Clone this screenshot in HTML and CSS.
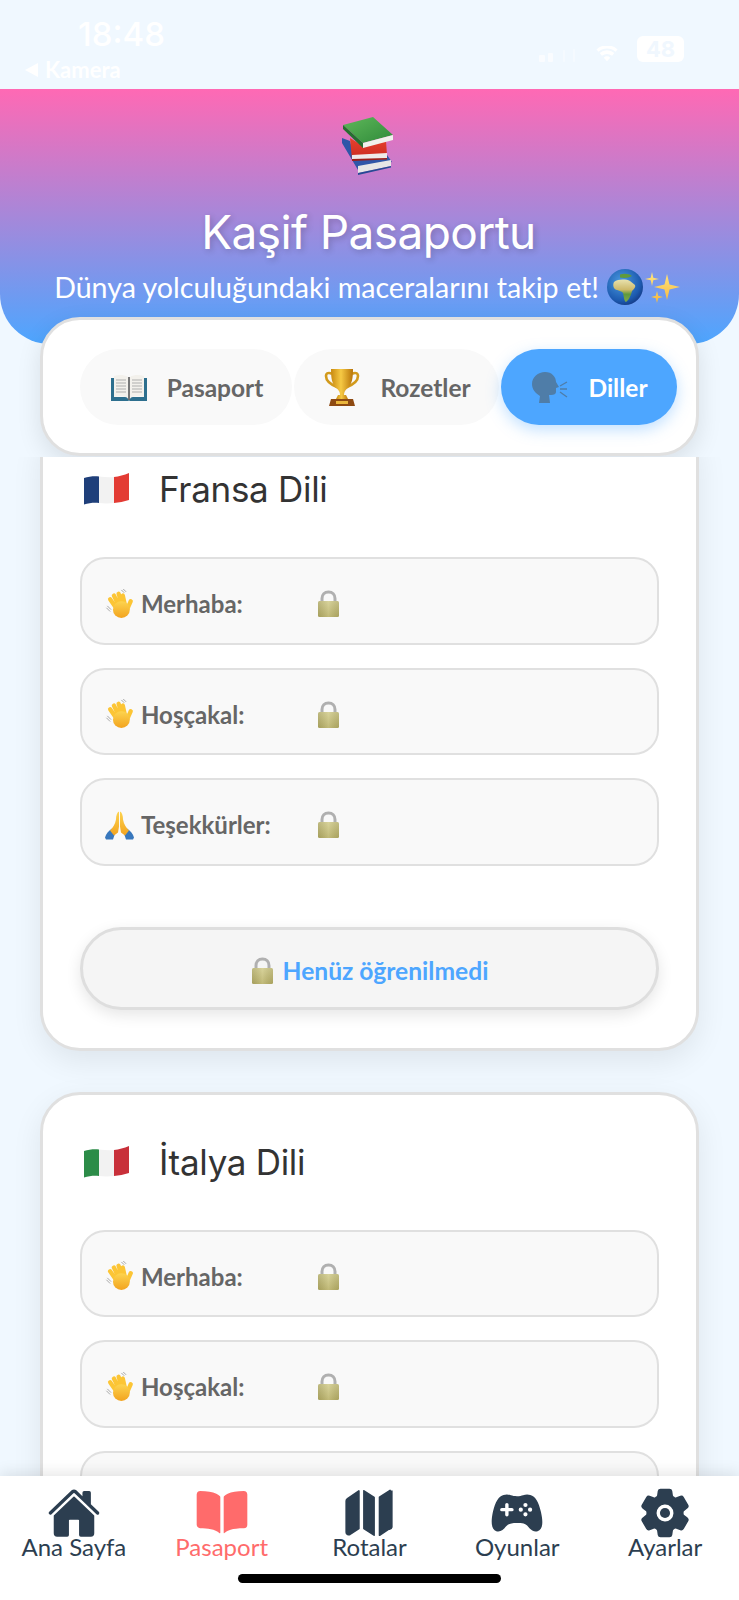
FILE: index.html
```html
<!DOCTYPE html>
<html lang="tr">
<head>
<meta charset="utf-8">
<title>Kaşif Pasaportu</title>
<link rel="stylesheet" href="styles.css">
</head>
<body>
<svg class="defs" aria-hidden="true">
  <defs>
    <linearGradient id="gGreen" x1="0" y1="0" x2="1" y2="1"><stop offset="0" stop-color="#5fb85a"/><stop offset="1" stop-color="#2f8a3a"/></linearGradient>
    <linearGradient id="gRed" x1="0" y1="0" x2="0" y2="1"><stop offset="0" stop-color="#e8412e"/><stop offset="1" stop-color="#c82a20"/></linearGradient>
    <radialGradient id="gSea" cx=".4" cy=".35" r=".75"><stop offset="0" stop-color="#4a9ae0"/><stop offset=".7" stop-color="#1d5bb0"/><stop offset="1" stop-color="#12307a"/></radialGradient>
    <linearGradient id="gLand" x1="0" y1="0" x2="0" y2="1"><stop offset="0" stop-color="#e8e2ae"/><stop offset=".45" stop-color="#cdb96a"/><stop offset=".65" stop-color="#5f9a3c"/><stop offset="1" stop-color="#7fa84a"/></linearGradient>
    <linearGradient id="gGold" x1="0" y1="0" x2="1" y2="0"><stop offset="0" stop-color="#c98a10"/><stop offset=".45" stop-color="#f6c944"/><stop offset="1" stop-color="#b87408"/></linearGradient>
    <linearGradient id="gHand" x1="0" y1="0" x2="0" y2="1"><stop offset="0" stop-color="#fdd44f"/><stop offset="1" stop-color="#f2a31f"/></linearGradient>
    <linearGradient id="gLock" x1="0" y1="0" x2="0" y2="1"><stop offset="0" stop-color="#d3cd8e"/><stop offset="1" stop-color="#b8b066"/></linearGradient>
    <linearGradient id="gStar" x1="0" y1="0" x2="0" y2="1"><stop offset="0" stop-color="#ffe680"/><stop offset="1" stop-color="#f6b73c"/></linearGradient>
    <linearGradient id="gFade" x1="0" y1="0" x2="1" y2="0"><stop offset="0" stop-color="#000" stop-opacity=".1"/><stop offset=".5" stop-color="#fff" stop-opacity=".12"/><stop offset="1" stop-color="#000" stop-opacity=".08"/></linearGradient>
  </defs>
  <symbol id="e-wave" viewBox="10 8 30 32">
    <g fill="none" stroke="#fcc535" stroke-width="4.600" stroke-linecap="round">
      <path d="M22 29l-7-10M25 27l-6-12M28 26l-4-13M31 26l-2.500-11M33 30l4-9"/>
    </g>
    <ellipse cx="27" cy="30" rx="9" ry="9" fill="url(#gHand)"/>
    <path fill="none" stroke="#8c8c8c" stroke-width=".8" d="M27 9l3 3M29 8l3 3M11 28l4 4M12 26l4 4"/>
  </symbol>
  <symbol id="e-pray" viewBox="9 10 29 29">
    <path fill="#3978bd" d="M9 37c1-4 4-7 7-9l3 5-2 6h-7zM38 37c-1-4-4-7-7-9l-3 5 2 6h7z"/>
    <path fill="url(#gHand)" d="M23 11c-2 1-3 4-3 8-1 5-3 8-6 11l4 5 4-3 1-6zM24 11c2 1 3 4 3 8 1 5 3 8 6 11l-4 5-4-3-1-6z"/>
  </symbol>
  <symbol id="e-lock" viewBox="0 0 23 27">
    <path fill="none" stroke="#b0b0b0" stroke-width="3" d="M5 14V8.500C5 4.500 7.500 2 11.500 2S18 4.500 18 8.500V14"/>
    <rect x="1" y="11" width="21" height="16" rx="1.500" fill="url(#gLock)"/>
    <rect x="1" y="11" width="21" height="16" rx="1.500" fill="url(#gFade)"/>
  </symbol>
  <symbol id="e-fr" viewBox="0 0 45 32">
    <path fill="#1f3f7a" d="M0 5c5-1.500 10-2 15-1.500V30c-5-.5-10 0-15 1.500z"/>
    <path fill="#f2f2f2" d="M15 3.500c5 .5 10 1 15 .5v26c-5 .5-10 .5-15 0z"/>
    <path fill="#e33b34" d="M30 4c5-.5 10-2 15-4v27c-5 1.500-10 2.500-15 3z"/>
  </symbol>
  <symbol id="e-it" viewBox="0 0 45 32">
    <path fill="#2c8c48" d="M0 5c5-1.500 10-2 15-1.500V30c-5-.5-10 0-15 1.500z"/>
    <path fill="#f2f2f2" d="M15 3.500c5 .5 10 1 15 .5v26c-5 .5-10 .5-15 0z"/>
    <path fill="#c8303a" d="M30 4c5-.5 10-2 15-4v27c-5 1.500-10 2.500-15 3z"/>
  </symbol>
</svg>

<div class="app">
  <div class="statusbar">
    <div class="status-left">
      <div class="time">18:48</div>
      <div class="back"><span class="back-arrow"></span>Kamera</div>
    </div>
    <div class="status-right">
      <svg class="signal" viewBox="0 0 38 13"><rect x="0" y="6" width="6" height="7" rx="1"/><rect x="9" y="4" width="5" height="9" rx="1"/><rect x="24" y="1" width="2" height="12" rx="1" opacity=".5"/><rect x="34" y="0" width="2" height="13" rx="1" opacity=".5"/></svg>
      <svg class="wifi" viewBox="0 0 24 16"><path d="M12 16l-3.500-4a5 5 0 017 0zM6.500 10L4 7a12 12 0 0116 0l-2.500 3a9 9 0 00-11 0zM2.800 5.500L.5 3a17 17 0 0123 0l-2.300 2.500a14 14 0 00-18.400 0z"/></svg>
      <div class="battery">48</div>
    </div>
  </div>

  <header class="hero">
    <svg class="hero-books" viewBox="0 0 80 75">
      <path fill="#2f56a8" d="M12 33l8 3 5 19 32-5 5 7-34 8-16-27z"/>
      <path fill="#e6e6e6" d="M28 61l33-6v6l-33 7z"/>
      <path fill="#264a94" d="M28 68l33-7v1.500L28 70z"/>
      <path fill="url(#gRed)" d="M20 33l13 8 23-5 1 14-35 5z"/>
      <path fill="#efeaea" d="M22 50l35-2v6l-35 1z"/>
      <path fill="#9c1d18" d="M22 54l35-1v1.500l-35 1.500z"/>
      <path fill="url(#gGreen)" d="M13 20l30-8 20 18-30 8z"/>
      <path fill="#256f30" d="M13 20v4l20 19v-5z"/>
      <path fill="#f1f1ec" d="M33 38l30-8v5l-30 8z"/>
    </svg>
    <h1 class="hero-title">Kaşif Pasaportu</h1>
    <div class="hero-sub">
      <span>Dünya yolculuğundaki maceralarını takip et!</span>
      <svg class="hero-sub-icons" viewBox="6 0 80 50">
        <circle cx="26" cy="25" r="18" fill="url(#gSea)"/>
        <path fill="#5f9a3c" d="M21 12.500c4-1.500 9-1 12 1.500-3 2-8 2.500-12 1.500z"/>
        <path fill="url(#gLand)" d="M15 20c4-3 12-3 16-1l5 4c1 2-1 4-3 6-1 4-3 9-6 11-2-1-2-5-3-9-2-3-7-2-9-5-1-2-1-4 0-6z"/>
        <path fill="url(#gStar)" d="M53 10l1.300 5.700L60 17l-5.700 1.300L53 24l-1.300-5.700L46 17l5.700-1.300zM68 12l2.500 10.500L81 25l-10.500 2.500L68 38l-2.500-10.500L55 25l10.500-2.500zM58 29l1.200 4.800L64 35l-4.800 1.200L58 41l-1.200-4.800L52 35l4.800-1.200z"/>
      </svg>
    </div>
  </header>

  <nav class="tabs">
    <div class="tab">
      <svg class="tab-icon tab-book" viewBox="12 13 36 27">
        <path fill="#2d6f8e" d="M12 17h3v19h13l2 4 2-4h13V17h3v23H12z"/>
        <path fill="#f3f1ec" d="M15 15c5-1.500 10-1.500 14 1v21c-4-2-9-2.500-14-1zM45 15c-5-1.500-10-1.500-14 1v21c4-2 9-2.500 14-1z"/>
        <path fill="none" stroke="#a8a8a8" stroke-width=".9" d="M17 19h10M17 22h10M17 25h10M17 28h10M17 31h10M33 19h10M33 22h10M33 25h10M33 28h10M33 31h10"/>
        <path stroke="#4b4b4b" stroke-width="1.500" d="M30 16v23"/>
      </svg>
      <span>Pasaport</span>
    </div>
    <div class="tab">
      <svg class="tab-icon tab-trophy" viewBox="10 8 36 38">
        <path fill="none" stroke="#d29a1c" stroke-width="2.600" d="M18 14c-3-2-6-1-6 2 0 5 6 9 11 11M38 14c3-2 6-1 6 2 0 5-6 9-11 11"/>
        <path fill="url(#gGold)" d="M17 9h22c0 9-1 15-5 19-3 2-4 4-4 7h-4c0-3-1-5-4-7-4-4-5-10-5-19z"/>
        <path fill="url(#gGold)" d="M24 35h8l2 4H22z"/>
        <path fill="#8e4a12" d="M17 39h22l2 7H15z"/>
        <rect x="22" y="41" width="12" height="3" fill="#eab63c"/>
      </svg>
      <span>Rozetler</span>
    </div>
    <div class="tab tab-active">
      <svg class="tab-icon tab-head" viewBox="13 10 36 31">
        <path fill="#4f7da8" d="M26 10c7 0 11 5 11 10l3 5-3 1v4c0 2-2 3-5 3h-2l1 8H20l1-7c-5-3-8-7-8-12 0-7 6-12 13-12z"/>
        <path fill="none" stroke="#4f7da8" stroke-width="1.300" d="M41 24l7-4M41 27h7M41 30l7 5"/>
      </svg>
      <span>Diller</span>
    </div>
  </nav>

  <main class="scroller">
    <section class="card card-first">
      <div class="card-head">
        <svg class="flag"><use href="#e-fr"/></svg>
        <h2 class="card-title">Fransa Dili</h2>
      </div>
      <div class="rows">
        <div class="row"><div class="row-label"><svg class="emo"><use href="#e-wave"/></svg><span>Merhaba:</span></div><svg class="lock"><use href="#e-lock"/></svg></div>
        <div class="row"><div class="row-label"><svg class="emo"><use href="#e-wave"/></svg><span>Hoşçakal:</span></div><svg class="lock"><use href="#e-lock"/></svg></div>
        <div class="row"><div class="row-label"><svg class="emo"><use href="#e-pray"/></svg><span>Teşekkürler:</span></div><svg class="lock"><use href="#e-lock"/></svg></div>
      </div>
      <div class="learn"><svg class="lock"><use href="#e-lock"/></svg><span>Henüz öğrenilmedi</span></div>
    </section>
    <section class="card">
      <div class="card-head">
        <svg class="flag"><use href="#e-it"/></svg>
        <h2 class="card-title">İtalya Dili</h2>
      </div>
      <div class="rows">
        <div class="row"><div class="row-label"><svg class="emo"><use href="#e-wave"/></svg><span>Merhaba:</span></div><svg class="lock"><use href="#e-lock"/></svg></div>
        <div class="row"><div class="row-label"><svg class="emo"><use href="#e-wave"/></svg><span>Hoşçakal:</span></div><svg class="lock"><use href="#e-lock"/></svg></div>
        <div class="row"></div>
      </div>
    </section>
  </main>

  <footer class="bottom">
    <div class="nav">
      <div class="nav-item">
        <svg class="nav-icon" viewBox="0 0 512 512"><path d="M261.560 101.280a8 8 0 00-11.060 0L66.400 277.150a8 8 0 00-2.470 5.790L63.900 448a32 32 0 0032 32H192a16 16 0 0016-16V328a8 8 0 018-8h80a8 8 0 018 8v136a16 16 0 0016 16h96.060a32 32 0 0032-32V282.940a8 8 0 00-2.470-5.790z"/><path d="M490.910 244.150l-74.800-71.560V64a16 16 0 00-16-16h-48a16 16 0 00-16 16v32l-57.920-55.380C272.770 35.140 264.710 32 256 32c-8.680 0-16.720 3.140-22.140 8.630l-212.700 203.500c-6.220 6-7 15.870-1.340 22.370A16 16 0 0043 267.560L250.500 69.280a8 8 0 0111.060 0l207.520 198.280a16 16 0 0022.590-.44c6.140-6.360 5.630-16.860-.76-22.970z"/></svg>
        <span class="nav-label">Ana Sayfa</span>
      </div>
      <div class="nav-item nav-active">
        <svg class="nav-icon" viewBox="0 0 512 512"><path d="M202.240 74C166.110 56.750 115.610 48.300 48 48a31.360 31.360 0 00-17.920 5.330A32 32 0 0016 79.900V366c0 19.340 13.760 33.930 32 33.930 71.070 0 142.360 6.640 185.060 47a4.110 4.110 0 006.940-3V106.820a15.890 15.890 0 00-5.460-12A143 143 0 00202.240 74zM481.920 53.300A31.330 31.330 0 00464 48c-67.610.3-118.110 8.710-154.240 26a143.310 143.310 0 00-32.310 20.780 15.930 15.930 0 00-5.450 12v337.130a3.930 3.930 0 006.680 2.810c25.670-25.500 70.720-46.820 185.360-46.810a32 32 0 0032-32v-288a32 32 0 00-14.120-26.610z"/></svg>
        <span class="nav-label">Pasaport</span>
      </div>
      <div class="nav-item">
        <svg class="nav-icon" viewBox="0 0 512 512"><path d="M48.170 113.340A32 32 0 0032 141.240V438a32 32 0 0047 28.370c.43-.23.85-.47 1.260-.74l84.140-55.050a8 8 0 003.630-6.720V46.450a8 8 0 00-12.510-6.630zM212.360 39.310A8 8 0 00200 46v357.560a8 8 0 003.630 6.720l96 62.420A8 8 0 00312 466V108.670a8 8 0 00-3.640-6.730zM464 41.890a8 8 0 00-12.510-6.630l-99.840 65.350a8 8 0 00-3.640 6.730v359.600a8 8 0 0012.490 6.630l84.140-56A32 32 0 00480 392V41.890z"/></svg>
        <span class="nav-label">Rotalar</span>
      </div>
      <div class="nav-item">
        <svg class="nav-icon" viewBox="0 0 512 512"><path d="M483.130 245.380C461.920 149.490 430 98.310 382.650 84.330A107.130 107.130 0 00352 80c-13.710 0-25.650 3.340-38.280 6.880C298.500 91.150 281.210 96 256 96s-42.510-4.840-57.760-9.110C185.600 83.340 173.670 80 160 80a115.740 115.740 0 00-31.730 4.320c-47.100 13.920-79 65.080-100.520 161C4.610 348.540 16 413.710 59.690 428.830a56.620 56.620 0 0018.640 3.220c29.930 0 53.930-24.930 70.330-45.340 18.530-23.100 40.220-34.820 107.340-34.820 59.950 0 84.760 8.130 106.190 34.820 13.470 16.780 26.200 28.520 38.900 35.910 16.890 9.820 33.770 12 50.160 6.370 25.820-8.810 40.620-32.100 44-69.240 2.570-28.480-1.390-65.890-12.120-114.370zM208 240h-32v32a16 16 0 01-32 0v-32h-32a16 16 0 010-32h32v-32a16 16 0 0132 0v32h32a16 16 0 010 32zm84 4a20 20 0 1120-20 20 20 0 01-20 20zm44 44a20 20 0 1120-19.950A20 20 0 01336 288zm0-88a20 20 0 1120-20 20 20 0 01-20 20zm44 44a20 20 0 1120-20 20 20 0 01-20 20z"/></svg>
        <span class="nav-label">Oyunlar</span>
      </div>
      <div class="nav-item">
        <svg class="nav-icon" viewBox="0 0 512 512"><circle cx="256" cy="256" r="48"/><path d="M470.390 300l-.47-.38-31.560-24.750a16.110 16.110 0 01-6.100-13.330v-11.560a16 16 0 016.110-13.220L469.920 212l.47-.38a26.680 26.680 0 005.900-34.060l-42.710-73.900a1.590 1.590 0 01-.13-.22A26.860 26.860 0 00401 92.140l-.35.13-37.100 14.930a15.940 15.940 0 01-14.470-1.290q-4.920-3.100-10-5.860a15.940 15.940 0 01-8.190-11.820l-5.590-39.590-.12-.72A27.220 27.220 0 00298.760 26h-85.520a26.920 26.920 0 00-26.450 22.390l-.09.56-5.570 39.670a16 16 0 01-8.130 11.820 175.210 175.210 0 00-10 5.820 15.920 15.920 0 01-14.430 1.270l-37.130-15-.35-.14a26.870 26.870 0 00-32.480 11.340l-.13.220-42.770 73.950a26.710 26.710 0 005.900 34.100l.47.38 31.560 24.750a16.110 16.110 0 016.100 13.330v11.560a16 16 0 01-6.110 13.220L42.080 300l-.47.38a26.680 26.680 0 00-5.900 34.060l42.710 73.900a1.590 1.590 0 01.13.22 26.860 26.860 0 0032.450 11.300l.35-.13 37.070-14.930a15.940 15.940 0 0114.470 1.290q4.920 3.110 10 5.860a15.940 15.940 0 018.190 11.820l5.560 39.590.12.720A27.220 27.220 0 00213.240 486h85.520a26.920 26.920 0 0026.450-22.390l.09-.56 5.570-39.670a16 16 0 018.180-11.820c3.420-1.840 6.760-3.790 10-5.820a15.920 15.920 0 0114.430-1.270l37.130 14.950.35.14a26.850 26.850 0 0032.480-11.340 2.530 2.530 0 01.13-.22l42.710-73.890a26.700 26.700 0 00-5.890-34.110zm-134.480-40.240a80 80 0 11-83.660-83.670 80.210 80.210 0 0183.660 83.670z"/></svg>
        <span class="nav-label">Ayarlar</span>
      </div>
    </div>
    <div class="home-bar"></div>
  </footer>
</div>
</body>
</html>
```

FILE: styles.css
```css
* { box-sizing: border-box; }
html, body { margin: 0; padding: 0; background: #f0f8ff; }
body { font-family: "Lato", "Noto Sans", sans-serif; }
.defs { position: absolute; width: 0; height: 0; }

.app { display: flex; flex-direction: column; width: 739px; height: 1600px; overflow: hidden; background: #f0f8ff; }

.statusbar { flex: none; height: 89px; display: flex; justify-content: space-between; align-items: flex-start; color: #fff; }
.status-left { padding: 15px 0 0 25px; }
.time { margin-left: 53px; font: 500 33px/38px "Inter", sans-serif; }
.back { display: flex; align-items: center; gap: 7px; margin-top: 5px; font: 700 22px/24px "Lato", sans-serif; }
.back-arrow { width: 0; height: 0; border-style: solid; border-width: 7px 13px 7px 0; border-color: transparent #fff transparent transparent; }
.status-right { display: flex; align-items: flex-end; height: 62px; padding: 36px 55px 0 0; }
.signal { width: 38px; height: 13px; fill: #fff; margin-right: 19px; opacity: .7; }
.wifi { width: 22px; height: 16px; fill: #fff; margin-right: 19px; }
.battery { width: 47px; height: 26px; border-radius: 6px; background: #fff; color: #f0f7fe; font: 700 22px/26px "Inter", sans-serif; text-align: center; }

.hero { flex: none; height: 255px; padding-top: 16px; display: flex; flex-direction: column; align-items: center; background: linear-gradient(180deg, #ff69b4 0%, #4da6ff 100%); border-radius: 0 0 50px 50px; color: #fff; }
.hero-books { display: block; width: 80px; height: 75px; flex: none; }
.hero-title { margin: 24px 2px 0 0; font: 400 46px/56px "Inter", sans-serif; letter-spacing: -.6px; text-shadow: 2px 2px 6px rgba(0,0,0,.2); }
.hero-sub { display: flex; align-items: center; margin-top: 2px; font-size: 28.600px; line-height: 50px; }
.hero-sub-icons { width: 80px; height: 50px; flex: none; margin-left: 6px; }

.tabs { flex: none; position: relative; height: 139px; margin: -27px 40px 1px; padding: 29px 20px 0 37px; display: grid; grid-template-columns: 212px 205px 176px; column-gap: 2px; align-items: start; background: #fff; border: 3px solid #e0e0e0; border-radius: 40px; box-shadow: 0 8px 25px rgba(0,0,0,.1); }
.tab { height: 76px; display: flex; align-items: center; justify-content: center; gap: 20px; padding-left: 2px; border-radius: 38px; background: #f9f9f9; color: #666; font-size: 24.500px; font-weight: 700; }
.tab-active { background: #4da6ff; color: #fff; box-shadow: 0 5px 15px rgba(77,166,255,.35); }
.tab-icon { flex: none; }
.tab-book { width: 36px; height: 27px; }
.tab-trophy { width: 36px; height: 38px; }
.tab-head { width: 36px; height: 31px; }

.scroller { flex: 1; min-height: 0; position: relative; overflow: hidden; background: #f0f8ff; }
.card { margin: 0 40px 41px; padding: 36px 37px 38px; background: #fff; border: 3px solid #e0e0e0; border-radius: 40px; box-shadow: 0 10px 30px rgba(0,0,0,.08); }
.card-first { margin-top: -38px; }
.card-head { display: flex; align-items: center; height: 62px; margin-bottom: 37px; padding-left: 4px; }
.flag { width: 45px; height: 32px; flex: none; margin-right: 30px; }
.card-title { margin: 0; font: 400 35px/44px "Inter", sans-serif; letter-spacing: -.3px; color: #333; }
.rows { display: flex; flex-direction: column; gap: 23px; }
.row { height: 87.500px; display: flex; align-items: center; padding: 6px 23px 0; border: 2px solid #e0e0e0; border-radius: 25px; background: #f9f9f9; }
.row-label { width: 212px; flex: none; display: flex; align-items: center; gap: 7px; color: #666; font-size: 24px; font-weight: 700; }
.emo { width: 29px; height: 30px; flex: none; }
.lock { width: 23px; height: 27px; flex: none; }
.learn { height: 83px; margin-top: 61px; display: flex; align-items: center; justify-content: center; gap: 9px; padding-top: 4px; border: 3px solid #dedede; border-radius: 42px; background: #f5f5f5; box-shadow: 0 5px 15px rgba(0,0,0,.1); color: #4da6ff; font-size: 24.600px; font-weight: 700; }

.bottom { flex: none; position: relative; z-index: 2; height: 124px; padding-top: 10px; background: #fff; box-shadow: 0 -3px 14px rgba(0,0,0,.1); }
.nav { display: grid; grid-template-columns: repeat(5, 1fr); color: #2c3e50; }
.nav-item { display: flex; flex-direction: column; align-items: center; }
.nav-active { color: #ff6b6b; }
.nav-icon { display: block; width: 54px; height: 54px; fill: currentColor; }
.nav-label { margin-top: -5px; font-size: 24px; line-height: 24px; }
.home-bar { width: 263px; height: 9px; margin: 15px auto 0; border-radius: 5px; background: #000; }
```
